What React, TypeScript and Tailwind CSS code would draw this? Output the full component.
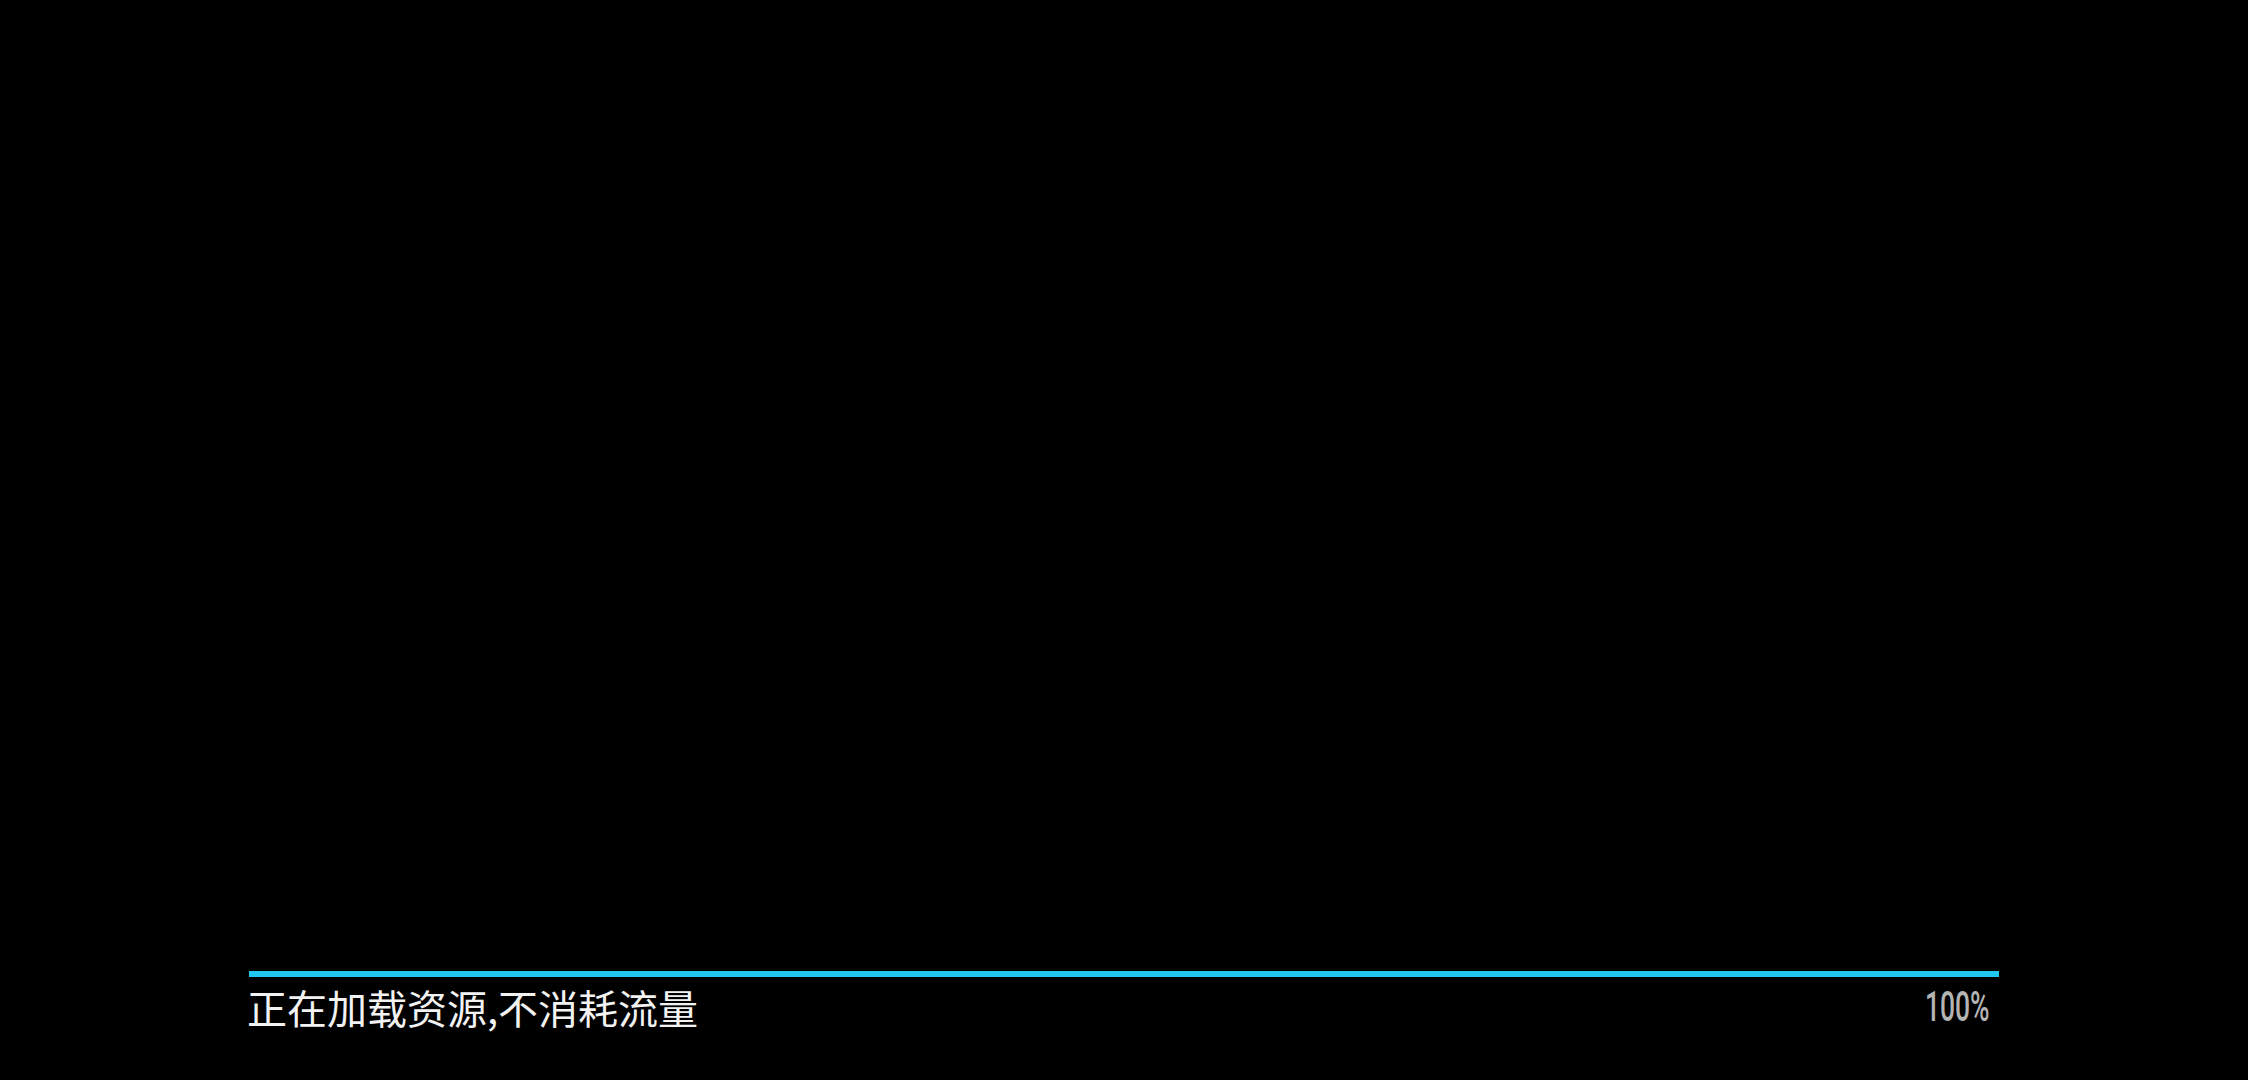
export default function App() {
    const progress = 100;

    return (
        <div className="h-screen w-full bg-black flex flex-col justify-end px-[249px] pb-[53px]">

            <div className="h-[6px] w-full bg-[#0d1a1f]">
                <div
                    className="h-full bg-[#1fc7f1]"
                    style={{ width: `${progress}%` }}
                />
            </div>

            <div className="mt-[10px] h-[40px] flex items-center justify-between">

                <p
                    className="-ml-[2px] text-[40px] leading-none text-[#f2f2f2]"
                    style={{ fontFamily: '"Noto Sans CJK SC", "Noto Sans", sans-serif' }}
                >
                    正在加载资源,不消耗流量
                </p>

                <span
                    className="mr-[9px] inline-block origin-right scale-x-[0.63] text-[42px] leading-none font-medium text-[#b4b4b4]"
                    style={{ fontFamily: 'Roboto, "Liberation Sans", sans-serif' }}
                >
                    {progress}%
                </span>

            </div>

        </div>
    );
}
